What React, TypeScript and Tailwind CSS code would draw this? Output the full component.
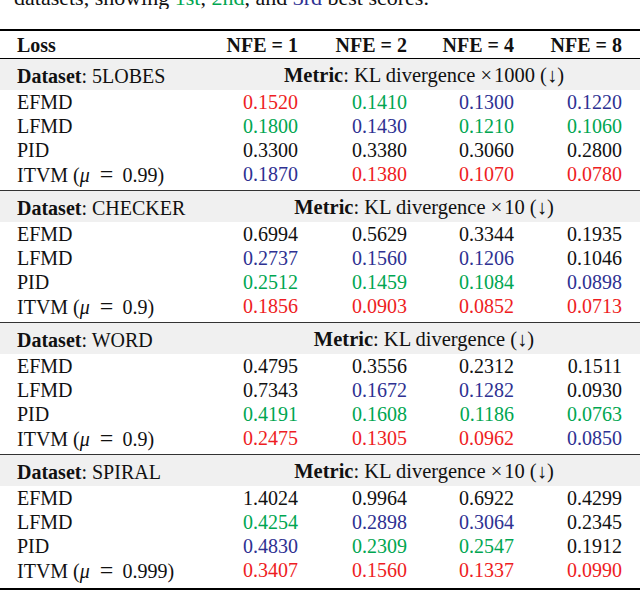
import React from "react";

type Tone = "r" | "g" | "b" | "k";
type Cell = [string, Tone];

interface Row {
  loss: string;
  mu?: string;
  values: Cell[];
}

interface Section {
  dataset: string;
  scale: string;
  rows: Row[];
}

const toneClass: Record<Tone, string> = {
  r: "text-[#ee1d23]",
  g: "text-[#00a651]",
  b: "text-[#2e3192]",
  k: "text-[#111]",
};

const sections: Section[] = [
  {
    dataset: "5LOBES",
    scale: "1000",
    rows: [
      { loss: "EFMD", values: [["0.1520", "r"], ["0.1410", "g"], ["0.1300", "b"], ["0.1220", "b"]] },
      { loss: "LFMD", values: [["0.1800", "g"], ["0.1430", "b"], ["0.1210", "g"], ["0.1060", "g"]] },
      { loss: "PID", values: [["0.3300", "k"], ["0.3380", "k"], ["0.3060", "k"], ["0.2800", "k"]] },
      { loss: "ITVM", mu: "0.99", values: [["0.1870", "b"], ["0.1380", "r"], ["0.1070", "r"], ["0.0780", "r"]] },
    ],
  },
  {
    dataset: "CHECKER",
    scale: "10",
    rows: [
      { loss: "EFMD", values: [["0.6994", "k"], ["0.5629", "k"], ["0.3344", "k"], ["0.1935", "k"]] },
      { loss: "LFMD", values: [["0.2737", "b"], ["0.1560", "b"], ["0.1206", "b"], ["0.1046", "k"]] },
      { loss: "PID", values: [["0.2512", "g"], ["0.1459", "g"], ["0.1084", "g"], ["0.0898", "b"]] },
      { loss: "ITVM", mu: "0.9", values: [["0.1856", "r"], ["0.0903", "r"], ["0.0852", "r"], ["0.0713", "r"]] },
    ],
  },
  {
    dataset: "WORD",
    scale: "",
    rows: [
      { loss: "EFMD", values: [["0.4795", "k"], ["0.3556", "k"], ["0.2312", "k"], ["0.1511", "k"]] },
      { loss: "LFMD", values: [["0.7343", "k"], ["0.1672", "b"], ["0.1282", "b"], ["0.0930", "k"]] },
      { loss: "PID", values: [["0.4191", "g"], ["0.1608", "g"], ["0.1186", "g"], ["0.0763", "g"]] },
      { loss: "ITVM", mu: "0.9", values: [["0.2475", "r"], ["0.1305", "r"], ["0.0962", "r"], ["0.0850", "b"]] },
    ],
  },
  {
    dataset: "SPIRAL",
    scale: "10",
    rows: [
      { loss: "EFMD", values: [["1.4024", "k"], ["0.9964", "k"], ["0.6922", "k"], ["0.4299", "k"]] },
      { loss: "LFMD", values: [["0.4254", "g"], ["0.2898", "b"], ["0.3064", "b"], ["0.2345", "k"]] },
      { loss: "PID", values: [["0.4830", "b"], ["0.2309", "g"], ["0.2547", "g"], ["0.1912", "k"]] },
      { loss: "ITVM", mu: "0.999", values: [["0.3407", "r"], ["0.1560", "r"], ["0.1337", "r"], ["0.0990", "r"]] },
    ],
  },
];

const grid = "grid grid-cols-[226px_72px_109px_107px_108px]";

function LossLabel({ row }: { row: Row }) {
  if (!row.mu) return <>{row.loss}</>;
  return (
    <>
      {row.loss} (<i>μ</i>
      <span className="ml-[10px] mr-[9px] text-[24px]">=</span>
      {row.mu})
    </>
  );
}

export default function App() {
  return (
    <div className="w-[640px] h-[592px] overflow-hidden bg-white text-[#111] font-['Liberation_Serif',serif]">
      <div className="h-[9px] overflow-hidden">
        <div className="mt-[-13px] pl-[14px] text-[22px] leading-[22px] whitespace-nowrap">
          datasets, showing <span className="text-[#00a651]">1st</span>,{" "}
          <span className="text-[#00a651]">2nd</span>, and{" "}
          <span className="text-[#2e3192]">3rd</span> best scores.
        </div>
      </div>

      <div className="mt-[20px] h-[2px] bg-black" />
      <div className={`${grid} h-[27px] items-center text-[20px] font-bold leading-none`}>
        <div className="pl-[17px]">Loss</div>
        <div className="text-right">NFE = 1</div>
        <div className="text-right">NFE = 2</div>
        <div className="text-right">NFE = 4</div>
        <div className="text-right">NFE = 8</div>
      </div>

      {sections.map((s, i) => (
        <div key={s.dataset}>
          <div className={i === 0 ? "h-px bg-black" : "h-px bg-[#333]"} />
          <div className={`${grid} h-[31px] items-center bg-[#f0f0f0] pt-[2px] text-[20px] leading-none`}>
            <div className="pl-[17px] whitespace-nowrap">
              <b>Dataset</b>: {s.dataset}
            </div>
            <div className="col-span-4 text-center whitespace-nowrap text-[20.5px]">
              <b>Metric</b>: KL divergence{" "}
              {s.scale && (
                <span>
                  <span className="mr-[2px]">×</span>
                  {s.scale}{" "}
                </span>
              )}
              (↓)
            </div>
          </div>
          {s.rows.map((r) => (
            <div key={r.loss} className={`${grid} h-[24px] items-center text-[20px] leading-none`}>
              <div className="pl-[17px] whitespace-nowrap">
                <LossLabel row={r} />
              </div>
              {r.values.map(([v, t], j) => (
                <div key={j} className={`text-right ${toneClass[t]}`}>
                  {v}
                </div>
              ))}
            </div>
          ))}
          <div className={i === sections.length - 1 ? "h-[6px]" : "h-[4px]"} />
        </div>
      ))}
      <div className="h-[2px] bg-black" />
    </div>
  );
}
